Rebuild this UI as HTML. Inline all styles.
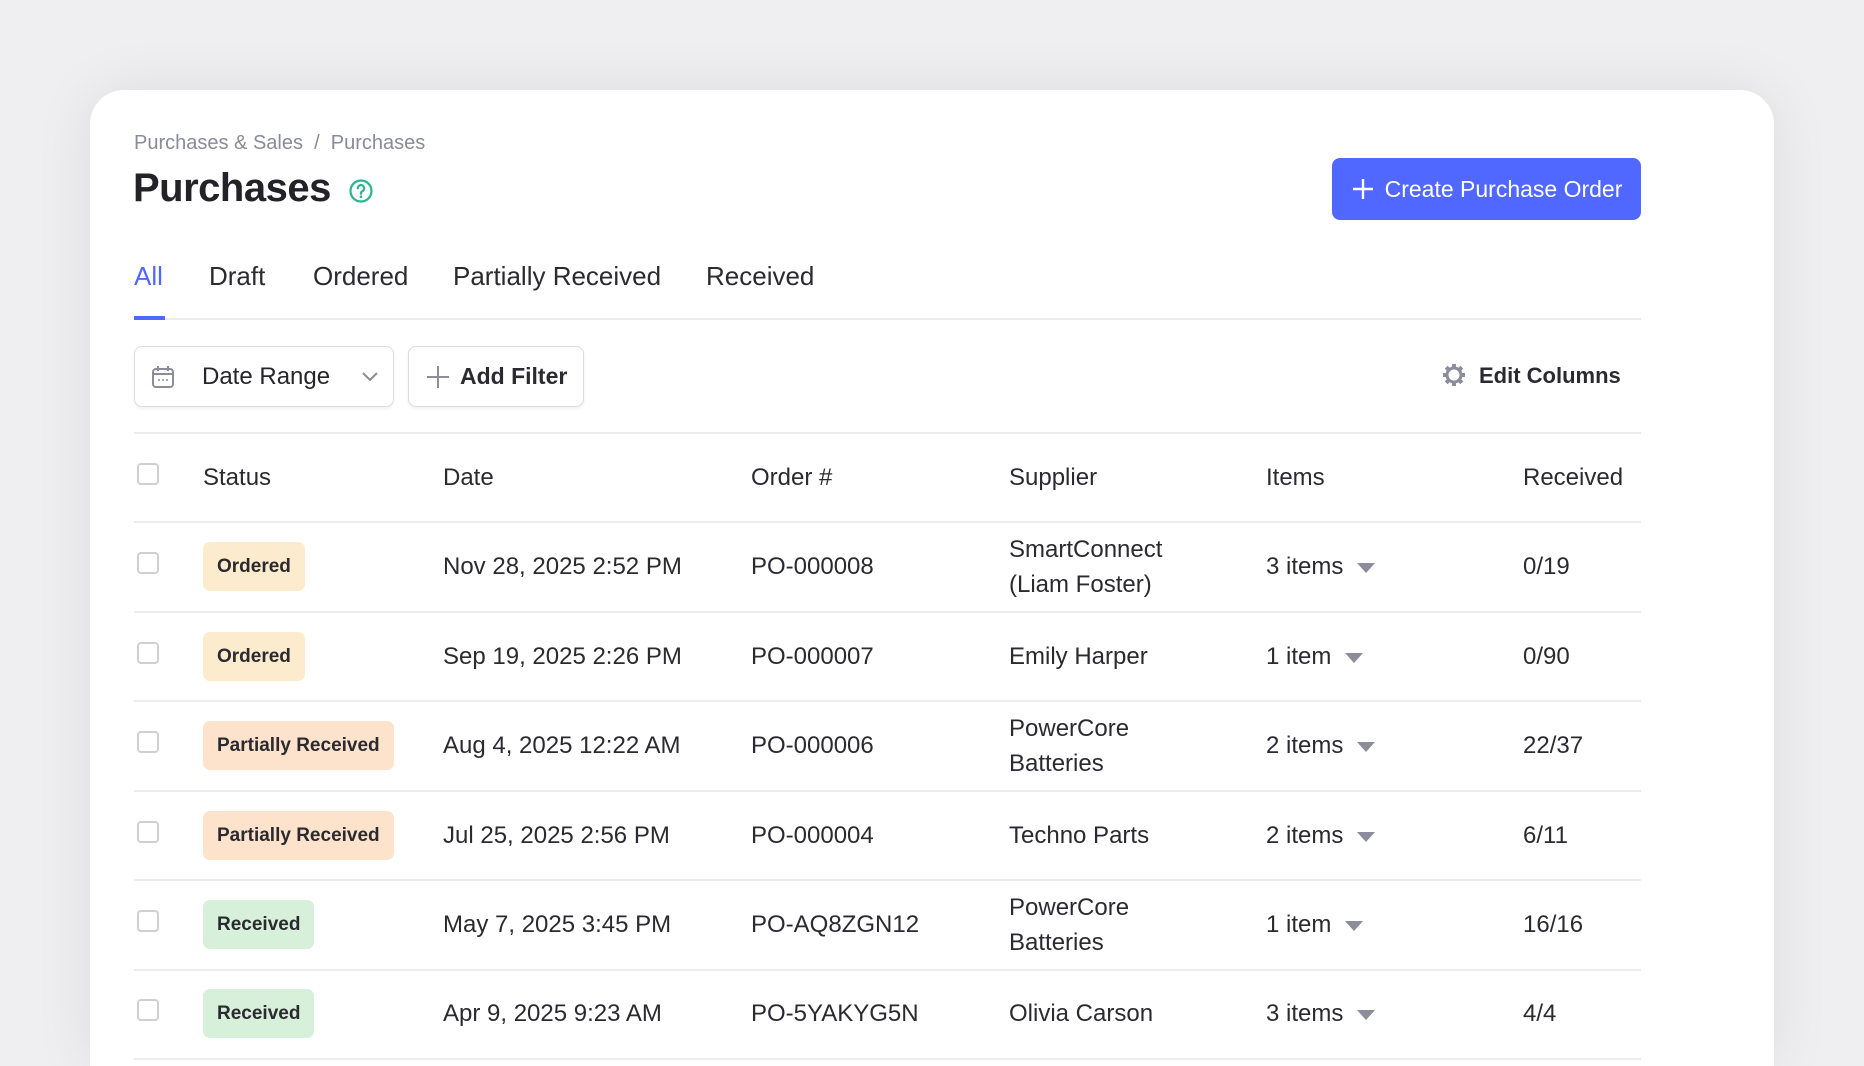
<!DOCTYPE html>
<html><head><meta charset="utf-8"><style>
*{box-sizing:border-box;margin:0;padding:0}
html{width:1864px;height:1066px;overflow:hidden}
body{width:1864px;height:1066px;overflow:hidden;background:#efeff1;font-family:"Liberation Sans",sans-serif;color:#25252b;position:relative}
.card{position:absolute;left:90px;top:90px;width:1684px;height:976px;background:#fff;border-radius:34px 34px 0 0;box-shadow:0 0 60px rgba(0,0,0,0.08)}
.a{position:absolute;white-space:nowrap}
.bc{left:134px;top:132px;font-size:20px;color:#8a8a99}
.title{left:133px;top:166px;font-size:40px;font-weight:bold;color:#222228;letter-spacing:-0.5px}
.btn{left:1332px;top:158px;width:309px;height:62px;background:#5068ff;border-radius:8px;color:#fff;font-size:23px;display:flex;align-items:center;justify-content:center;gap:10px}
.tab{top:261px;font-size:26px;color:#2a2a30}
.line{position:absolute;left:134px;width:1507px;height:2px;background:#ececef}
.fb{position:absolute;top:346px;height:61px;border:1.5px solid #dcdce2;border-radius:8px;box-shadow:0 2px 3px rgba(0,0,0,0.06);font-size:23px;display:flex;align-items:center}
.cb{position:absolute;left:137px;width:22px;height:22px;border:2px solid #cfcfd6;border-radius:4px}
.th{font-size:24px;color:#2a2a30}
.td{font-size:24px;color:#2a2a30}
.badge{position:absolute;left:203px;height:49px;border-radius:7px;font-size:19px;font-weight:bold;display:flex;align-items:center;padding:0 14px;color:#2a2a30}
.o{background:#fdebcd}.p{background:#fde3cb}.r{background:#d6f0da}
.tri{display:inline-block;width:0;height:0;border-left:9px solid transparent;border-right:9px solid transparent;border-top:10px solid #8c8c9a;margin-left:14px;vertical-align:middle}
</style></head><body>
<div class="card"></div>
<div class="a bc">Purchases &amp; Sales &nbsp;/&nbsp; Purchases</div>
<div class="a title">Purchases</div>
<svg class="a" style="left:348px;top:178px" width="26" height="26" viewBox="0 0 26 26"><circle cx="13" cy="13" r="10.5" fill="none" stroke="#2bb58e" stroke-width="2.2"/><path d="M9.8 10.3a3.2 3.2 0 1 1 4.5 2.9c-.9.4-1.3 1-1.3 2v.6" fill="none" stroke="#2bb58e" stroke-width="2.2" stroke-linecap="round"/><circle cx="13" cy="18.7" r="1.3" fill="#2bb58e"/></svg>
<div class="a btn"><svg width="24" height="24" viewBox="0 0 24 24"><path d="M12 2v20M2 12h20" stroke="#fff" stroke-width="2.4"/></svg><span>Create Purchase Order</span></div>
<div class="a tab" style="left:134px;color:#5068ff">All</div>
<div class="a tab" style="left:209px">Draft</div>
<div class="a tab" style="left:313px">Ordered</div>
<div class="a tab" style="left:453px">Partially Received</div>
<div class="a tab" style="left:706px">Received</div>
<div class="line" style="top:318px"></div>
<div class="a" style="left:134px;top:316px;width:31px;height:4px;background:#5068ff"></div>
<div class="fb" style="left:134px;width:260px"><svg style="margin-left:15px" width="26" height="26" viewBox="0 0 26 26"><rect x="3" y="5" width="20" height="18" rx="3" fill="none" stroke="#8c8c9a" stroke-width="2"/><path d="M3 10h20M8 2v5M18 2v5" stroke="#8c8c9a" stroke-width="2"/><circle cx="9" cy="16" r="1" fill="#8c8c9a"/><circle cx="13" cy="16" r="1" fill="#8c8c9a"/><circle cx="17" cy="16" r="1" fill="#8c8c9a"/></svg><span style="margin-left:26px;font-size:24px">Date Range</span><svg style="margin-left:30px" width="20" height="14" viewBox="0 0 20 14"><path d="M3 3l7 7 7-7" fill="none" stroke="#8c8c9a" stroke-width="2"/></svg></div>
<div class="fb" style="left:408px;width:176px"><svg style="margin-left:16px" width="26" height="26" viewBox="0 0 26 26"><path d="M13 2v22M2 13h22" stroke="#8c8c9a" stroke-width="2"/></svg><span style="margin-left:9px;font-weight:bold;color:#2a2a30">Add Filter</span></div>
<svg class="a" style="left:1441px;top:362px" width="26" height="26" viewBox="0 0 26 26"><circle cx="13" cy="13" r="7" fill="none" stroke="#8c8c9a" stroke-width="3"/><g stroke="#8c8c9a" stroke-width="4"><path d="M13 2v4M13 20v4M2 13h4M20 13h4M5.2 5.2l2.8 2.8M18 18l2.8 2.8M5.2 20.8l2.8-2.8M18 8l2.8-2.8"/></g><circle cx="13" cy="13" r="5" fill="#fff"/></svg>
<div class="a" style="left:1479px;top:363px;font-size:22px;font-weight:bold;color:#2a2a30">Edit Columns</div>
<div class="line" style="top:432px"></div>
<div class="cb" style="top:463px"></div>
<div class="a th" style="left:203px;top:464px">Status</div>
<div class="a th" style="left:443px;top:464px">Date</div>
<div class="a th" style="left:751px;top:464px">Order #</div>
<div class="a th" style="left:1009px;top:464px">Supplier</div>
<div class="a th" style="left:1266px;top:464px">Items</div>
<div class="a th" style="left:1523px;top:464px">Received</div>
<div class="line" style="top:521px"></div>

<div class="cb" style="top:552px"></div><div class="badge o" style="top:542px">Ordered</div>
<div class="a td" style="left:443px;top:553px">Nov 28, 2025 2:52 PM</div><div class="a td" style="left:751px;top:553px">PO-000008</div>
<div class="a td" style="left:1009px;top:532px;line-height:35px">SmartConnect<br>(Liam Foster)</div>
<div class="a td" style="left:1266px;top:553px">3 items<span class="tri"></span></div><div class="a td" style="left:1523px;top:553px">0/19</div>
<div class="line" style="top:611px"></div>

<div class="cb" style="top:642px"></div><div class="badge o" style="top:632px">Ordered</div>
<div class="a td" style="left:443px;top:643px">Sep 19, 2025 2:26 PM</div><div class="a td" style="left:751px;top:643px">PO-000007</div>
<div class="a td" style="left:1009px;top:643px">Emily Harper</div>
<div class="a td" style="left:1266px;top:643px">1 item<span class="tri"></span></div><div class="a td" style="left:1523px;top:643px">0/90</div>
<div class="line" style="top:700px"></div>

<div class="cb" style="top:731px"></div><div class="badge p" style="top:721px">Partially Received</div>
<div class="a td" style="left:443px;top:732px">Aug 4, 2025 12:22 AM</div><div class="a td" style="left:751px;top:732px">PO-000006</div>
<div class="a td" style="left:1009px;top:711px;line-height:35px">PowerCore<br>Batteries</div>
<div class="a td" style="left:1266px;top:732px">2 items<span class="tri"></span></div><div class="a td" style="left:1523px;top:732px">22/37</div>
<div class="line" style="top:790px"></div>

<div class="cb" style="top:821px"></div><div class="badge p" style="top:811px">Partially Received</div>
<div class="a td" style="left:443px;top:822px">Jul 25, 2025 2:56 PM</div><div class="a td" style="left:751px;top:822px">PO-000004</div>
<div class="a td" style="left:1009px;top:822px">Techno Parts</div>
<div class="a td" style="left:1266px;top:822px">2 items<span class="tri"></span></div><div class="a td" style="left:1523px;top:822px">6/11</div>
<div class="line" style="top:879px"></div>

<div class="cb" style="top:910px"></div><div class="badge r" style="top:900px">Received</div>
<div class="a td" style="left:443px;top:911px">May 7, 2025 3:45 PM</div><div class="a td" style="left:751px;top:911px">PO-AQ8ZGN12</div>
<div class="a td" style="left:1009px;top:890px;line-height:35px">PowerCore<br>Batteries</div>
<div class="a td" style="left:1266px;top:911px">1 item<span class="tri"></span></div><div class="a td" style="left:1523px;top:911px">16/16</div>
<div class="line" style="top:969px"></div>

<div class="cb" style="top:999px"></div><div class="badge r" style="top:989px">Received</div>
<div class="a td" style="left:443px;top:1000px">Apr 9, 2025 9:23 AM</div><div class="a td" style="left:751px;top:1000px">PO-5YAKYG5N</div>
<div class="a td" style="left:1009px;top:1000px">Olivia Carson</div>
<div class="a td" style="left:1266px;top:1000px">3 items<span class="tri"></span></div><div class="a td" style="left:1523px;top:1000px">4/4</div>
<div class="line" style="top:1058px"></div>
</body></html>
